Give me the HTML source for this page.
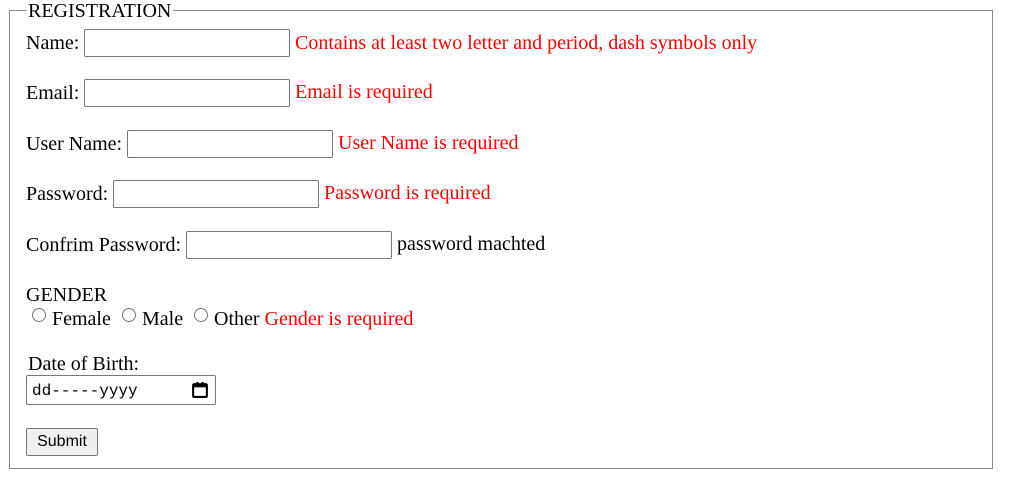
<!DOCTYPE html>
<html><head><style>
body{margin:0;width:1023px;height:501px;background:#fff;font-family:"Liberation Serif",serif;font-size:20px;color:#000;position:relative;overflow:hidden}
.fs{position:absolute;left:9px;top:10px;width:982px;height:458px;border:1px solid #8a8a8a;border-top:none}
.tl{position:absolute;top:10px;height:1px;background:#8a8a8a}
.a{position:absolute;white-space:nowrap;line-height:22px}
.in{position:absolute;width:204px;height:26px;border:1px solid #767676;border-radius:2px;background:#fff}
.r{color:#f00}
.rad{position:absolute;top:5px;width:12px;height:12px;border:1px solid #767676;border-radius:50%}
</style></head><body>
<div class="fs"></div>
<div class="tl" style="left:9px;width:18px"></div>
<div class="tl" style="left:173px;width:819px"></div>
<div class="a" style="left:28px;top:0px">REGISTRATION</div>

<div class="a" style="left:26px;top:32px">Name:</div>
<div class="in" style="left:84px;top:29px"></div>
<div class="a r" style="left:295px;top:32px">Contains at least two letter and period, dash symbols only</div>

<div class="a" style="left:26px;top:82px">Email:</div>
<div class="in" style="left:84px;top:79px"></div>
<div class="a r" style="left:295px;top:81px">Email is required</div>

<div class="a" style="left:26px;top:133px">User Name:</div>
<div class="in" style="left:127px;top:130px"></div>
<div class="a r" style="left:338px;top:132px">User Name is required</div>

<div class="a" style="left:26px;top:183px">Password:</div>
<div class="in" style="left:113px;top:180px"></div>
<div class="a r" style="left:324px;top:182px">Password is required</div>

<div class="a" style="left:26px;top:234px">Confrim Password:</div>
<div class="in" style="left:186px;top:231px"></div>
<div class="a" style="left:397px;top:233px">password machted</div>

<div class="a" style="left:26px;top:284px">GENDER</div>
<div class="rad" style="left:32px;top:308px"></div>
<div class="a" style="left:52px;top:308px">Female</div>
<div class="rad" style="left:122px;top:308px"></div>
<div class="a" style="left:142px;top:308px">Male</div>
<div class="rad" style="left:194px;top:308px"></div>
<div class="a" style="left:214px;top:308px">Other <span class="r">Gender is required</span></div>

<div class="a" style="left:28px;top:353px">Date of Birth:</div>
<div style="position:absolute;left:26px;top:375px;width:190px;height:30px;border:1px solid #767676;border-radius:2px;font-family:'Liberation Mono',monospace;font-size:16px;line-height:30px;box-sizing:border-box;padding-left:5px">dd-----yyyy
<svg style="position:absolute;left:164px;top:5px" width="18" height="18" viewBox="0 0 17 17"><rect x="2" y="3" width="13" height="12" rx="1" fill="none" stroke="#000" stroke-width="2"/><rect x="2" y="3" width="13" height="3" fill="#000"/><rect x="5" y="1" width="2" height="3" fill="#000"/><rect x="10" y="1" width="2" height="3" fill="#000"/></svg></div>

<div style="position:absolute;left:26px;top:428px;width:70px;height:26px;border:1px solid #767676;border-radius:2px;background:#efefef;font-family:'Liberation Sans',sans-serif;font-size:16px;line-height:26px;text-align:center">Submit</div>
</body></html>
